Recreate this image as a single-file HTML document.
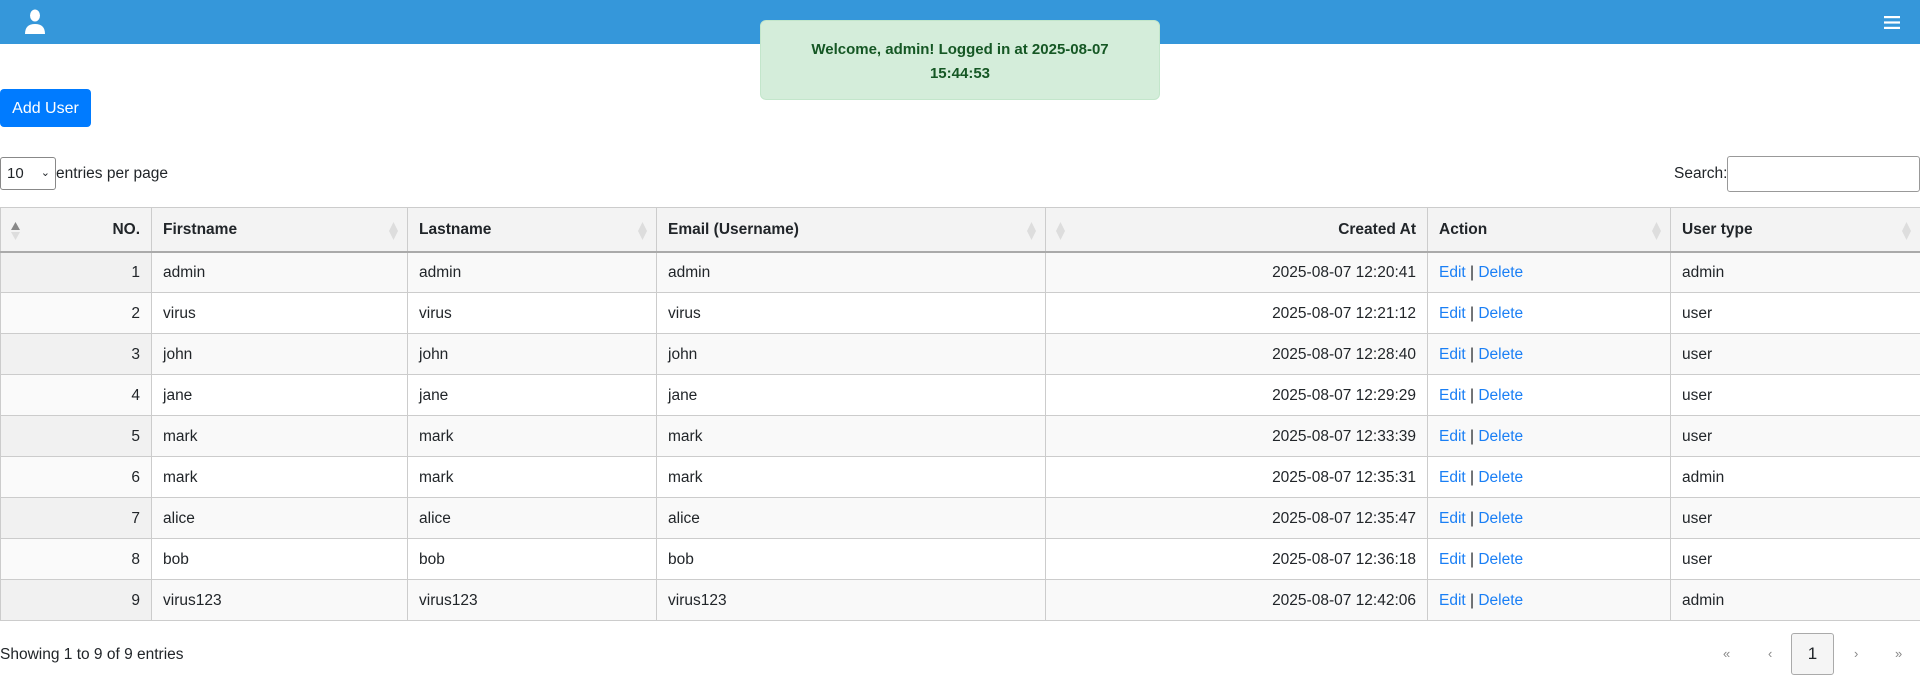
<!DOCTYPE html>
<html><head><meta charset="utf-8"><style>
*{box-sizing:border-box}
body{margin:0;width:1920px;height:681px;overflow:hidden;font-family:"Liberation Sans",sans-serif;font-size:16px;color:#212529;background:#fff;position:relative}
.hdr{position:absolute;left:0;top:0;width:1920px;height:44px;background:#3597da}
.toast{position:absolute;left:760px;top:20px;width:400px;height:80px;background:#d4edda;border:1px solid #c3e6cb;border-radius:6px;color:#155724;font-weight:bold;font-size:15px;text-align:center;line-height:24px;padding-top:17px}
.btn{position:absolute;left:0;top:89px;width:91px;height:38px;background:#007bff;color:#fff;border-radius:4px;font-size:16px;line-height:40px;text-align:center}
.sel{position:absolute;left:0;top:157px;width:56px;height:33px;border:1px solid #888;border-radius:3px;font-size:15px;line-height:31px;padding-left:6px}
.sel span{position:absolute;right:5px;top:0;font-size:11px}
.epp{position:absolute;left:56px;top:165px;font-size:15.5px}
.srch{position:absolute;left:1674px;top:165px;font-size:15.5px}
.inp{position:absolute;left:1727px;top:156px;width:193px;height:36px;border:1px solid #999;border-radius:3px}
table{position:absolute;left:0;top:207px;width:1920px;border-collapse:collapse;table-layout:fixed}
th,td{border:1px solid #ccc;padding:2px 11px 0;white-space:nowrap;position:relative;font-size:15.5px}
th{background:#f3f3f3;height:44px;text-align:left;font-weight:bold;border-bottom:2px solid #aaa}
td{height:41px}
tbody tr:nth-child(odd) td{background:#f9f9f9}
tbody tr:nth-child(odd) td:first-child{background:#f1f1f1}
tbody tr:nth-child(even) td:first-child{background:#fafafa}
.r{text-align:right}
a{color:#1a7ff5;text-decoration:none}
.s{position:absolute;right:9px;top:14px}
.s2{position:absolute;left:10px;top:14px}
.foot{position:absolute;left:0;top:646px;font-size:15.5px}
.pg{position:absolute;top:646px;color:#888;font-size:13px}
.pb{position:absolute;left:1791px;top:633px;width:43px;height:42px;border:1px solid #aaa;border-radius:3px;background:#f5f5f5;text-align:center;line-height:40px;font-size:17px}
</style></head><body>
<div class="hdr">
<svg style="position:absolute;left:24px;top:9px" width="22" height="26" viewBox="0 0 22 26"><ellipse cx="11" cy="6.5" rx="5" ry="6" fill="#fff"/><path d="M1 25 Q1 15 11 15 Q21 15 21 25 Z" fill="#fff"/></svg>
<svg style="position:absolute;left:1884px;top:16px" width="16" height="13" viewBox="0 0 16 13"><rect y="0" width="16" height="2.2" fill="#fff"/><rect y="5.4" width="16" height="2.2" fill="#fff"/><rect y="10.8" width="16" height="2.2" fill="#fff"/></svg>
</div>
<div class="toast">Welcome, admin! Logged in at 2025-08-07<br>15:44:53</div>
<div class="btn">Add User</div>
<div class="sel">10<span>&#8964;</span></div>
<div class="epp">entries per page</div>
<div class="srch">Search:</div>
<div class="inp"></div>
<table>
<colgroup><col style="width:151px"><col style="width:256px"><col style="width:249px"><col style="width:389px"><col style="width:382px"><col style="width:243px"><col style="width:250px"></colgroup>
<thead><tr>
<th class="r"><svg class="s2" width="9" height="18" viewBox="0 0 9 18"><path d="M4.5 0L9 8H0Z" fill="#888"/><path d="M4.5 18L9 10H0Z" fill="#ddd"/></svg>NO.</th>
<th>Firstname<svg class="s" width="9" height="18" viewBox="0 0 9 18"><path d="M4.5 0L9 9L4.5 18L0 9Z" fill="#ddd"/></svg></th>
<th>Lastname<svg class="s" width="9" height="18" viewBox="0 0 9 18"><path d="M4.5 0L9 9L4.5 18L0 9Z" fill="#ddd"/></svg></th>
<th>Email (Username)<svg class="s" width="9" height="18" viewBox="0 0 9 18"><path d="M4.5 0L9 9L4.5 18L0 9Z" fill="#ddd"/></svg></th>
<th class="r"><svg class="s2" width="9" height="18" viewBox="0 0 9 18"><path d="M4.5 0L9 9L4.5 18L0 9Z" fill="#ddd"/></svg>Created At</th>
<th>Action<svg class="s" width="9" height="18" viewBox="0 0 9 18"><path d="M4.5 0L9 9L4.5 18L0 9Z" fill="#ddd"/></svg></th>
<th>User type<svg class="s" width="9" height="18" viewBox="0 0 9 18"><path d="M4.5 0L9 9L4.5 18L0 9Z" fill="#ddd"/></svg></th></tr></thead>
<tbody>
<tr><td class="r">1</td><td>admin</td><td>admin</td><td>admin</td><td class="r">2025-08-07 12:20:41</td><td><a>Edit</a> | <a>Delete</a></td><td>admin</td></tr>
<tr><td class="r">2</td><td>virus</td><td>virus</td><td>virus</td><td class="r">2025-08-07 12:21:12</td><td><a>Edit</a> | <a>Delete</a></td><td>user</td></tr>
<tr><td class="r">3</td><td>john</td><td>john</td><td>john</td><td class="r">2025-08-07 12:28:40</td><td><a>Edit</a> | <a>Delete</a></td><td>user</td></tr>
<tr><td class="r">4</td><td>jane</td><td>jane</td><td>jane</td><td class="r">2025-08-07 12:29:29</td><td><a>Edit</a> | <a>Delete</a></td><td>user</td></tr>
<tr><td class="r">5</td><td>mark</td><td>mark</td><td>mark</td><td class="r">2025-08-07 12:33:39</td><td><a>Edit</a> | <a>Delete</a></td><td>user</td></tr>
<tr><td class="r">6</td><td>mark</td><td>mark</td><td>mark</td><td class="r">2025-08-07 12:35:31</td><td><a>Edit</a> | <a>Delete</a></td><td>admin</td></tr>
<tr><td class="r">7</td><td>alice</td><td>alice</td><td>alice</td><td class="r">2025-08-07 12:35:47</td><td><a>Edit</a> | <a>Delete</a></td><td>user</td></tr>
<tr><td class="r">8</td><td>bob</td><td>bob</td><td>bob</td><td class="r">2025-08-07 12:36:18</td><td><a>Edit</a> | <a>Delete</a></td><td>user</td></tr>
<tr><td class="r">9</td><td>virus123</td><td>virus123</td><td>virus123</td><td class="r">2025-08-07 12:42:06</td><td><a>Edit</a> | <a>Delete</a></td><td>admin</td></tr>
</tbody></table>
<div class="foot">Showing 1 to 9 of 9 entries</div>
<div class="pg" style="left:1723px">«</div>
<div class="pg" style="left:1768px">‹</div>
<div class="pb">1</div>
<div class="pg" style="left:1854px">›</div>
<div class="pg" style="left:1895px">»</div>
</body></html>
